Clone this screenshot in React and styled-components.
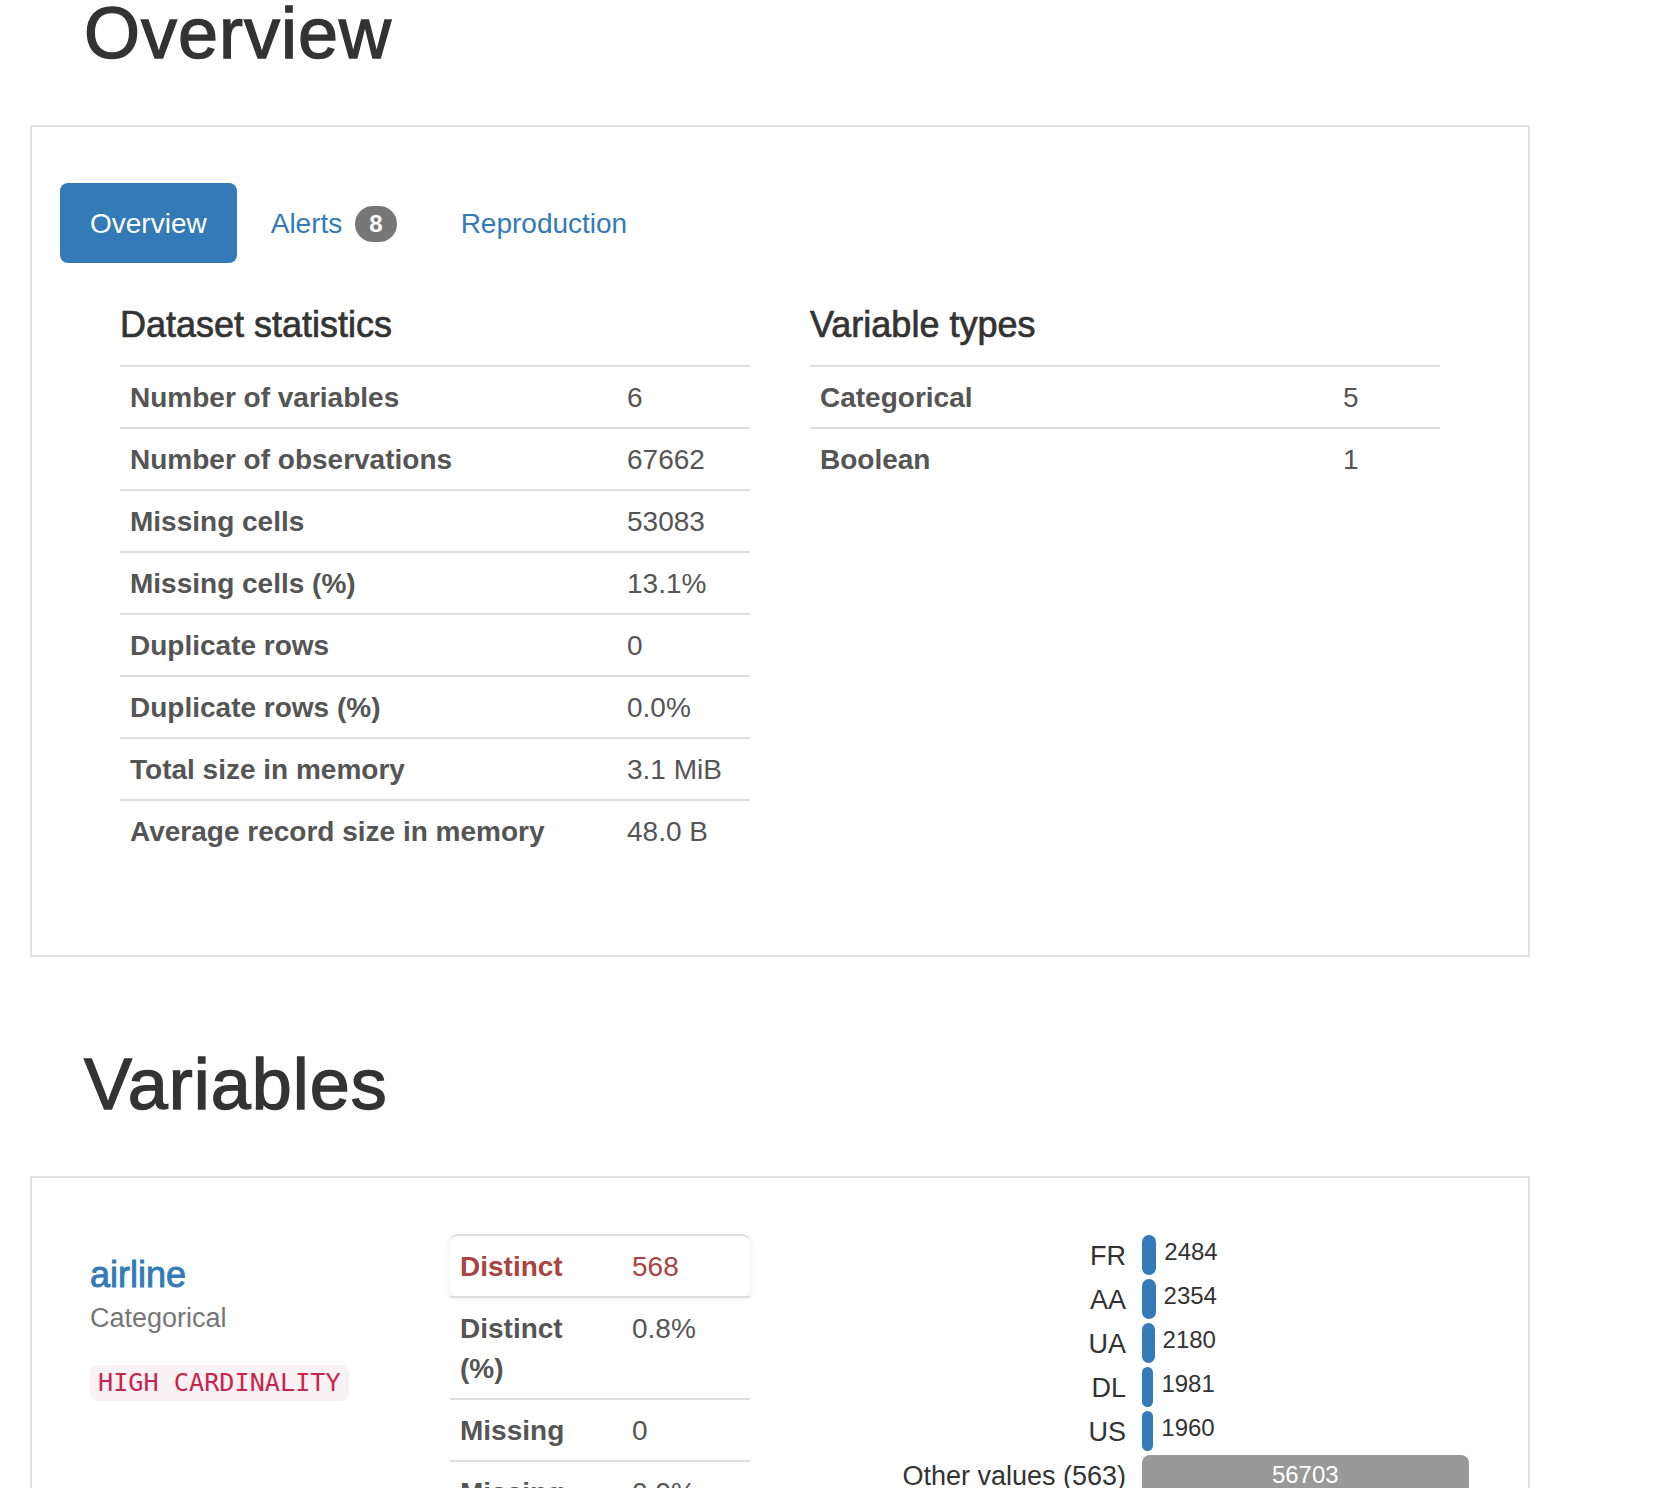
import React from 'react'
import styled, { createGlobalStyle } from 'styled-components'

const GlobalStyle = createGlobalStyle`
  body {
    margin: 0;
    background: #fff;
    color: #333;
    font-family: "Liberation Sans", Arial, Helvetica, sans-serif;
  }
`

const Page = styled.div`
  width: 1500px;
  margin-left: 30px;
  height: 1488px;
  overflow: hidden;
`

// headings in the report are a medium weight, thickened a bit with a stroke
const SectionTitle = styled.h1`
  font-size: 72px;
  line-height: 1.1;
  font-weight: 500;
  letter-spacing: 1px;
  -webkit-text-stroke: 1.4px #333;
  color: #333;
  margin: ${({ first }) => (first ? '-6px' : '88px')} 0 52px;
  padding-left: 54px;
`

const Box = styled.div`
  box-sizing: border-box;
  width: 1500px;
  border: 2px solid #e0e0e6;
  padding: 56px 28px 54px;
`

const Tabs = styled.ul`
  display: flex;
  gap: 4px;
  list-style: none;
  margin: 0;
  padding: 0;
`

const Tab = styled.li`
  font-size: 28px;
  line-height: 40px;
  padding: 21px 30px 19px;
  border-radius: 8px;
  color: ${({ active }) => (active ? '#fff' : '#337ab7')};
  background: ${({ active }) => (active ? '#337ab7' : 'transparent')};
`

const Badge = styled.span`
  display: inline-block;
  margin-left: 13px;
  padding: 6px 14px;
  font-size: 24px;
  font-weight: bold;
  line-height: 1;
  color: #fff;
  background: #777;
  border-radius: 20px;
  vertical-align: middle;
  position: relative;
  top: -2px;
`

const TabContent = styled.div`
  margin-top: 22px;
  padding: 0 60px;
  display: grid;
  grid-template-columns: 1fr 1fr;
  column-gap: 60px;
`

const PanelTitle = styled.p`
  font-size: 36px;
  line-height: 1.1;
  font-weight: 500;
  -webkit-text-stroke: 0.7px #333;
  color: #333;
  margin: 20px 0;
`

const StatTable = styled.div`
  margin-bottom: 40px;
`

const StatRow = styled.div`
  display: grid;
  grid-template-columns: ${({ labelWidth }) => labelWidth}px 1fr;
  border-top: 2px solid #ddd;
  font-size: 28px;
  line-height: 40px;
  color: ${({ alert }) => (alert ? '#a94442' : '#555')};
  ${({ alert }) =>
    alert &&
    `
    background: #fff;
    border-radius: 8px;
    box-shadow: 0 3px 8px rgba(0, 0, 0, 0.07);
  `}
`

const StatLabel = styled.div`
  padding: 11px 10px 9px;
  font-weight: bold;
`

const StatValue = styled.div`
  padding: 11px 10px 9px;
`

const VariableGrid = styled.div`
  display: grid;
  grid-template-columns: 360px 360px 720px;
`

const Col = styled.div`
  padding: 0 30px;
`

const VarName = styled.p`
  font-size: 36px;
  line-height: 1.1;
  font-weight: 500;
  -webkit-text-stroke: 0.9px #337ab7;
  margin: 21px 0 20px;
  color: #337ab7;

  small {
    font-size: 75%;
    line-height: 1;
    color: #777;
    -webkit-text-stroke: 0;
  }
`

const AlertTag = styled.code`
  display: inline-block;
  margin-top: 11px;
  padding: 4px 8px;
  font-family: "DejaVu Sans Mono", Menlo, Consolas, monospace;
  font-size: 25.2px;
  line-height: 28px;
  color: #c7254e;
  background: #f9f2f4;
  border-radius: 8px;
`

const FreqChart = styled.div`
  margin-top: 1px;
  display: grid;
  grid-template-columns: 316px 1fr;
  column-gap: 16px;
  row-gap: 4px;
  align-items: center;
`

const FreqLabel = styled.div`
  text-align: right;
  font-size: 27px;
  padding-top: 4px;
  color: #333;
`

const BarCell = styled.div`
  display: flex;
  align-items: center;
  height: 40px;
`

const Bar = styled.div`
  height: 40px;
  border-radius: 8px;
  background: ${({ other }) => (other ? '#999' : '#337ab7')};
  color: #fff;
  font-size: 24px;
  display: flex;
  align-items: center;
  justify-content: center;
  flex-shrink: 0;
`

const BarCount = styled.span`
  margin-left: 8px;
  padding-bottom: 6px;
  font-size: 24px;
  color: #333;
`

const datasetStats = [
  ['Number of variables', '6'],
  ['Number of observations', '67662'],
  ['Missing cells', '53083'],
  ['Missing cells (%)', '13.1%'],
  ['Duplicate rows', '0'],
  ['Duplicate rows (%)', '0.0%'],
  ['Total size in memory', '3.1 MiB'],
  ['Average record size in memory', '48.0 B'],
]

const variableTypes = [
  ['Categorical', '5'],
  ['Boolean', '1'],
]

const airlineStats = [
  ['Distinct', '568', true],
  ['Distinct (%)', '0.8%'],
  ['Missing', '0'],
  ['Missing (%)', '0.0%'],
]

const freqs = [
  ['FR', 2484],
  ['AA', 2354],
  ['UA', 2180],
  ['DL', 1981],
  ['US', 1960],
]

const OTHER = 56703
const BAR_MAX = 326.5

const Stats = ({ rows, labelWidth }) => (
  <StatTable>
    {rows.map(([label, value, alert]) => (
      <StatRow key={label} labelWidth={labelWidth} alert={alert}>
        <StatLabel>{label}</StatLabel>
        <StatValue>{value}</StatValue>
      </StatRow>
    ))}
  </StatTable>
)

const App = () => (
  <Page>
    <GlobalStyle />
    <SectionTitle first>Overview</SectionTitle>
    <Box>
      <Tabs>
        <Tab active>Overview</Tab>
        <Tab>
          Alerts<Badge>8</Badge>
        </Tab>
        <Tab>Reproduction</Tab>
      </Tabs>
      <TabContent>
        <div>
          <PanelTitle>Dataset statistics</PanelTitle>
          <Stats rows={datasetStats} labelWidth={497} />
        </div>
        <div>
          <PanelTitle>Variable types</PanelTitle>
          <Stats rows={variableTypes} labelWidth={523} />
        </div>
      </TabContent>
    </Box>

    <SectionTitle>Variables</SectionTitle>
    <Box>
      <VariableGrid>
        <Col>
          <VarName>
            airline
            <br />
            <small>Categorical</small>
          </VarName>
          <AlertTag>HIGH CARDINALITY</AlertTag>
        </Col>
        <Col>
          <Stats rows={airlineStats} labelWidth={172} />
        </Col>
        <Col>
          <FreqChart>
            {freqs.map(([label, count]) => (
              <React.Fragment key={label}>
                <FreqLabel>{label}</FreqLabel>
                <BarCell>
                  <Bar style={{ width: (BAR_MAX * count) / OTHER }} />
                  <BarCount>{count}</BarCount>
                </BarCell>
              </React.Fragment>
            ))}
            <FreqLabel>Other values (563)</FreqLabel>
            <BarCell>
              <Bar other style={{ width: BAR_MAX }}>
                {OTHER}
              </Bar>
            </BarCell>
          </FreqChart>
        </Col>
      </VariableGrid>
    </Box>
  </Page>
)

export default App
